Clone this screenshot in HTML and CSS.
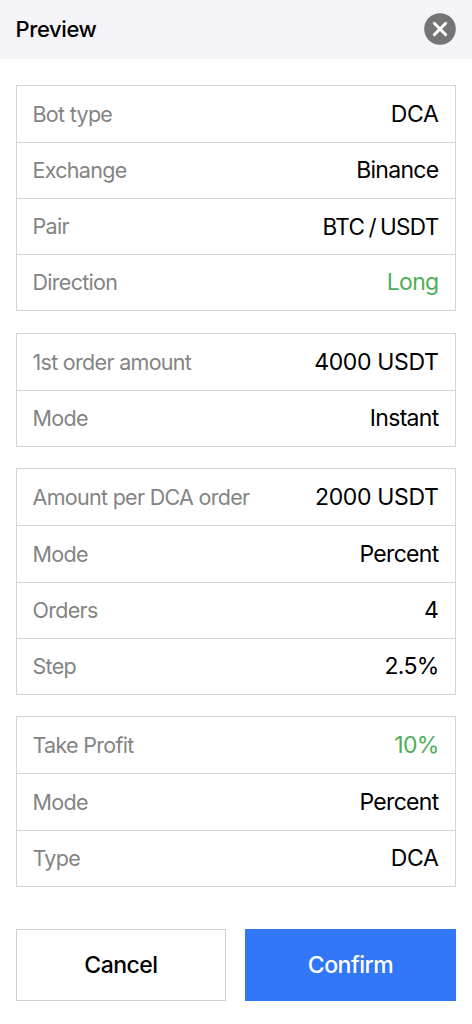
FILE: index.html
```html
<!DOCTYPE html>
<html lang="en">
<head>
<meta charset="utf-8">
<title>Preview</title>
<link rel="stylesheet" href="styles.css">
</head>
<body>
<header class="header">
  <h1 class="title">Preview</h1>
  <button class="close" aria-label="Close">
    <svg viewBox="0 0 32 32" width="32" height="32"><circle cx="16" cy="16" r="15.8" fill="#747474"/><path d="M10.3 10.3L21.7 21.7M21.7 10.3L10.3 21.7" stroke="#fff" stroke-width="3" stroke-linecap="round" fill="none"/></svg>
  </button>
</header>
<main class="content">
  <dl class="card card-first">
    <div class="row"><dt>Bot type</dt><dd>DCA</dd></div>
    <div class="row"><dt>Exchange</dt><dd class="word">Binance</dd></div>
    <div class="row"><dt>Pair</dt><dd class="pair">BTC / USDT</dd></div>
    <div class="row"><dt>Direction</dt><dd class="word green">Long</dd></div>
  </dl>
  <dl class="card">
    <div class="row"><dt>1st order amount</dt><dd>4000 USDT</dd></div>
    <div class="row"><dt>Mode</dt><dd class="word">Instant</dd></div>
  </dl>
  <dl class="card">
    <div class="row"><dt>Amount per DCA order</dt><dd>2000 USDT</dd></div>
    <div class="row row-tall"><dt>Mode</dt><dd class="word">Percent</dd></div>
    <div class="row"><dt>Orders</dt><dd>4</dd></div>
    <div class="row"><dt>Step</dt><dd class="percent">2.5%</dd></div>
  </dl>
  <dl class="card">
    <div class="row"><dt>Take Profit</dt><dd class="percent green">10%</dd></div>
    <div class="row row-tall"><dt>Mode</dt><dd class="word">Percent</dd></div>
    <div class="row"><dt>Type</dt><dd>DCA</dd></div>
  </dl>
  <div class="actions">
    <button class="button">Cancel</button>
    <button class="button primary">Confirm</button>
  </div>
</main>
</body>
</html>
```
FILE: styles.css
```css
* { box-sizing: border-box; }
body { margin: 0; height: 1024px; background: #fff; color: #000; font-family: Inter, "Liberation Sans", sans-serif; }
.header { height: 59px; padding: 0 16px 2px 15.5px; display: flex; align-items: center; justify-content: space-between; background: #f4f4f8; }
.title { margin: 0; font-size: 22px; font-weight: 450; letter-spacing: -0.4px; }
.close { padding: 0; border: 0; background: none; display: flex; }
.content { padding: 26px 16px 0 16px; }
.card { margin: 0 0 21px; border: 1px solid #d4d4d4; }
.card-first { margin-bottom: 22px; }
.row { height: 56px; padding: 0 17px 0 15.5px; display: flex; align-items: center; justify-content: space-between; border-bottom: 1px solid #d4d4d4; }
.row:first-child, .row-tall { height: 57px; }
.row:last-child { height: 55px; border-bottom: 0; }
.row dt { padding-bottom: 1px; color: #848484; font-size: 21.5px; letter-spacing: -0.7px; }
.row dd { margin: 0 -0.5px 0 0; padding-bottom: 1px; font-size: 23px; letter-spacing: -0.35px; }
.row .word { letter-spacing: -0.7px; }
.row .pair { font-size: 22.5px; letter-spacing: -0.7px; word-spacing: -1.4px; }
.row .percent { letter-spacing: -0.75px; }
.row .green { color: #4caf58; }
.actions { display: grid; grid-template-columns: 210fr 211fr; gap: 19px; margin-top: 42px; }
.button { height: 72px; padding: 0; border: 1px solid #cfcfcf; background: #fff; color: #000; font: 450 23px Inter, "Liberation Sans", sans-serif; letter-spacing: -0.5px; }
.primary { border-color: #3277f8; background: #3277f8; color: #fff; }
```
